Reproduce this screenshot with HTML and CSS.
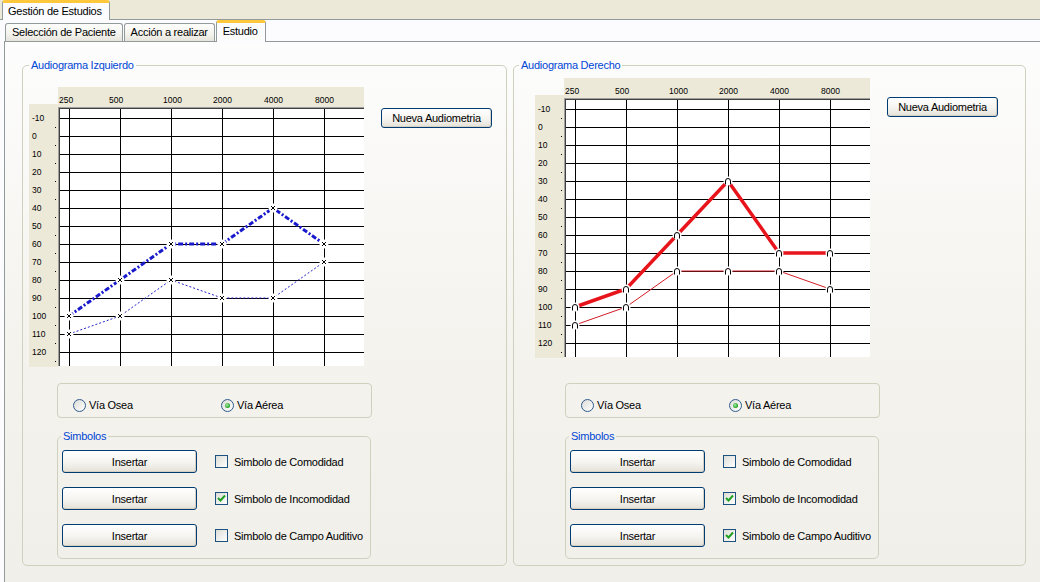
FILE: index.html
```html
<!DOCTYPE html>
<html lang="es">
<head>
<meta charset="utf-8">
<title>Gestión de Estudios</title>
<link rel="stylesheet" href="styles.css">
</head>
<body>
<div class="tabrow top">
  <div class="tab selected first">Gestión de Estudios</div>
</div>
<div class="page outer">
  <div class="tabrow inner">
    <div class="tab">Selección de Paciente</div>
    <div class="tab">Acción a realizar</div>
    <div class="tab selected">Estudio</div>
  </div>
  <div class="page innerpage">

    <fieldset class="group audio left">
      <legend>Audiograma Izquierdo</legend>
      <div class="audio-top">
        <svg class="chart" width="335" height="280" viewBox="0 0 335 280">
          <defs>
            <g id="mx"><circle r="4.5" fill="#fff"/><path d="M-2 -2L2 2M2 -2L-2 2" stroke="#000" stroke-width="1" fill="none"/></g>
          </defs>
          <rect x="29" y="0" width="306" height="20" fill="#ece9d8"/>
          <rect x="0" y="17" width="29" height="263" fill="#ece9d8"/>
          <rect x="29" y="20" width="306" height="259" fill="#fff"/>
          <path d="M29 31.5H335M29 49.5H335M29 67.5H335M29 85.5H335M29 103.5H335M29 121.5H335M29 139.5H335M29 157.5H335M29 175.5H335M29 193.5H335M29 211.5H335M29 229.5H335M29 247.5H335M29 265.5H335M40.5 20V279M91.5 20V279M142.5 20V279M193.5 20V279M244.5 20V279M295.5 20V279" stroke="#000" stroke-width="1" fill="none"/>
          <path d="M29 20.5H335M29.5 20V279" stroke="#a0a0a0" fill="none"/>
          <path d="M30 21.5H335M30.5 21V279" stroke="#404040" fill="none"/>
          <path d="M26 40h1v1h-1zM26 58h1v1h-1zM26 76h1v1h-1zM26 94h1v1h-1zM26 112h1v1h-1zM26 130h1v1h-1zM26 148h1v1h-1zM26 166h1v1h-1zM26 184h1v1h-1zM26 202h1v1h-1zM26 220h1v1h-1zM26 238h1v1h-1zM26 256h1v1h-1zM26 274h1v1h-1z" fill="#000"/>
          <g class="lbl">
            <text x="30" y="16">250</text><text x="80" y="16">500</text><text x="134" y="16">1000</text><text x="184" y="16">2000</text><text x="235" y="16">4000</text><text x="286" y="16">8000</text>
            <text x="3" y="34">-10</text><text x="3" y="52">0</text><text x="3" y="70">10</text><text x="3" y="88">20</text><text x="3" y="106">30</text><text x="3" y="124">40</text><text x="3" y="142">50</text><text x="3" y="160">60</text><text x="3" y="178">70</text><text x="3" y="196">80</text><text x="3" y="214">90</text><text x="3" y="232">100</text><text x="3" y="250">110</text><text x="3" y="268">120</text>
          </g>
          <polyline points="40,247 91,229 142,193 193,211 244,211 295,175" fill="none" stroke="#2323c8" stroke-width="1" stroke-dasharray="2 2"/>
          <polyline points="40,229 91,193 142,157 193,157 244,121 295,157" fill="none" stroke="#1a1acd" stroke-width="3" stroke-dasharray="5 2 2 2"/>
          <use href="#mx" x="40" y="229"/><use href="#mx" x="91" y="193"/><use href="#mx" x="142" y="157"/><use href="#mx" x="193" y="157"/><use href="#mx" x="244" y="121"/><use href="#mx" x="295" y="157"/>
          <use href="#mx" x="40" y="247"/><use href="#mx" x="91" y="229"/><use href="#mx" x="142" y="193"/><use href="#mx" x="193" y="211"/><use href="#mx" x="244" y="211"/><use href="#mx" x="295" y="175"/>
        </svg>
        <button class="btn nueva">Nueva Audiometria</button>
      </div>
      <div class="via">
        <label class="option"><span class="radio"></span>Vía Osea</label>
        <label class="option"><span class="radio checked"></span>Vía Aérea</label>
      </div>
      <fieldset class="group simbolos">
        <legend>Simbolos</legend>
        <div class="sym-grid">
          <button class="btn insert">Insertar</button>
          <label class="checkopt"><span class="check"></span>Simbolo de Comodidad</label>
          <button class="btn insert">Insertar</button>
          <label class="checkopt"><span class="check"><svg width="11" height="11" viewBox="0 0 11 11"><polyline points="2,5 4.5,7.5 9,2.5" fill="none" stroke="#21a121" stroke-width="2"/></svg></span>Simbolo de Incomodidad</label>
          <button class="btn insert">Insertar</button>
          <label class="checkopt"><span class="check"></span>Simbolo de Campo Auditivo</label>
        </div>
      </fieldset>
    </fieldset>

    <fieldset class="group audio right">
      <legend>Audiograma Derecho</legend>
      <div class="audio-top">
        <svg class="chart" width="335" height="280" viewBox="0 0 335 280">
          <defs>
            <g id="mo"><circle r="4.5" fill="#fff"/><path d="M-2.5 3.5V0A2.5 2.5 0 0 1 2.5 0V3.5" stroke="#000" stroke-width="1" fill="none"/></g>
          </defs>
          <rect x="29" y="0" width="306" height="20" fill="#ece9d8"/>
          <rect x="0" y="17" width="29" height="263" fill="#ece9d8"/>
          <rect x="29" y="20" width="306" height="259" fill="#fff"/>
          <path d="M29 31.5H335M29 49.5H335M29 67.5H335M29 85.5H335M29 103.5H335M29 121.5H335M29 139.5H335M29 157.5H335M29 175.5H335M29 193.5H335M29 211.5H335M29 229.5H335M29 247.5H335M29 265.5H335M40.5 20V279M91.5 20V279M142.5 20V279M193.5 20V279M244.5 20V279M295.5 20V279" stroke="#000" stroke-width="1" fill="none"/>
          <path d="M29 20.5H335M29.5 20V279" stroke="#a0a0a0" fill="none"/>
          <path d="M30 21.5H335M30.5 21V279" stroke="#404040" fill="none"/>
          <path d="M26 40h1v1h-1zM26 58h1v1h-1zM26 76h1v1h-1zM26 94h1v1h-1zM26 112h1v1h-1zM26 130h1v1h-1zM26 148h1v1h-1zM26 166h1v1h-1zM26 184h1v1h-1zM26 202h1v1h-1zM26 220h1v1h-1zM26 238h1v1h-1zM26 256h1v1h-1zM26 274h1v1h-1z" fill="#000"/>
          <g class="lbl">
            <text x="30" y="16">250</text><text x="80" y="16">500</text><text x="134" y="16">1000</text><text x="184" y="16">2000</text><text x="235" y="16">4000</text><text x="286" y="16">8000</text>
            <text x="3" y="34">-10</text><text x="3" y="52">0</text><text x="3" y="70">10</text><text x="3" y="88">20</text><text x="3" y="106">30</text><text x="3" y="124">40</text><text x="3" y="142">50</text><text x="3" y="160">60</text><text x="3" y="178">70</text><text x="3" y="196">80</text><text x="3" y="214">90</text><text x="3" y="232">100</text><text x="3" y="250">110</text><text x="3" y="268">120</text>
          </g>
          <polyline points="40,247 91,229 142,193 193,193 244,193 295,211" fill="none" stroke="#d21c24" stroke-width="1"/>
          <polyline points="40,229 91,211 142,157 193,103 244,175 295,175" fill="none" stroke="#e8141c" stroke-width="3.5"/>
          <use href="#mo" x="40" y="229"/><use href="#mo" x="91" y="211"/><use href="#mo" x="142" y="157"/><use href="#mo" x="193" y="103"/><use href="#mo" x="244" y="175"/><use href="#mo" x="295" y="175"/>
          <use href="#mo" x="40" y="247"/><use href="#mo" x="91" y="229"/><use href="#mo" x="142" y="193"/><use href="#mo" x="193" y="193"/><use href="#mo" x="244" y="193"/><use href="#mo" x="295" y="211"/>
        </svg>
        <button class="btn nueva">Nueva Audiometria</button>
      </div>
      <div class="via">
        <label class="option"><span class="radio"></span>Vía Osea</label>
        <label class="option"><span class="radio checked"></span>Vía Aérea</label>
      </div>
      <fieldset class="group simbolos">
        <legend>Simbolos</legend>
        <div class="sym-grid">
          <button class="btn insert">Insertar</button>
          <label class="checkopt"><span class="check"></span>Simbolo de Comodidad</label>
          <button class="btn insert">Insertar</button>
          <label class="checkopt"><span class="check"><svg width="11" height="11" viewBox="0 0 11 11"><polyline points="2,5 4.5,7.5 9,2.5" fill="none" stroke="#21a121" stroke-width="2"/></svg></span>Simbolo de Incomodidad</label>
          <button class="btn insert">Insertar</button>
          <label class="checkopt"><span class="check"><svg width="11" height="11" viewBox="0 0 11 11"><polyline points="2,5 4.5,7.5 9,2.5" fill="none" stroke="#21a121" stroke-width="2"/></svg></span>Simbolo de Campo Auditivo</label>
        </div>
      </fieldset>
    </fieldset>

  </div>
</div>
</body>
</html>
```

FILE: styles.css
```css
* { box-sizing: border-box; }
html, body { margin: 0; padding: 0; }
body {
  width: 1040px;
  height: 582px;
  overflow: hidden;
  background: #ece9d8;
  font-family: "Liberation Sans", Arial, sans-serif;
  font-size: 11px;
  letter-spacing: -0.25px;
  color: #000;
}

/* tabs */
.tabrow { display: flex; align-items: flex-end; }
.tabrow.top { height: 19px; padding-left: 2px; background: #ece9d8; }
.tabrow.inner { height: 21px; padding-left: 5px; }

.tab {
  height: 18px;
  line-height: 17px;
  padding: 0 6px;
  margin-right: 1px;
  border: 1px solid #919b9c;
  border-bottom: none;
  border-radius: 3px 3px 0 0;
  background: linear-gradient(#ffffff, #f3f2ec 60%, #e6e4db);
  white-space: nowrap;
}
.tab.selected {
  position: relative;
  z-index: 1;
  height: 22px;
  margin-bottom: -1px;
  line-height: 16px;
  padding: 0 7px 0 6px;
  background: #fcfcfe;
  border-top: 3px solid #ffc83c;
}
.tab.first { height: 20px; padding: 0 7px 0 5px; }

.page.outer {
  height: 563px;
  border-top: 1px solid #919b9c;
  background: #fcfcfe;
}
.page.innerpage {
  display: flex;
  gap: 6px;
  height: 541px;
  margin-left: 4px;
  padding: 17px 0 0 17px;
  border-top: 1px solid #919b9c;
  border-left: 1px solid #919b9c;
  background: linear-gradient(#fdfdfd, #f4f3ee 55%, #f0efe9);
}

/* group boxes */
.group {
  margin: 0;
  padding: 0;
  min-width: 0;
  border: 1px solid #d0d0bf;
  border-radius: 5px;
}
.group > legend {
  margin-left: 6px;
  padding: 0 2px;
  line-height: 13px;
  color: #0046d5;
}
.audio { height: 507px; }
.audio.left { width: 485px; }
.audio.right { width: 513px; }
.audio.right > legend { margin-left: 5px; }

.audio-top { display: flex; align-items: flex-start; }
.chart { display: block; flex: none; }
.chart .lbl text { font-family: "Liberation Sans", Arial, sans-serif; font-size: 8.5px; letter-spacing: 0; fill: #000; }
.left .chart { margin: 15px 0 0 6px; }
.right .chart { margin: 6px 0 0 21px; }

/* buttons */
.btn {
  font: inherit;
  letter-spacing: inherit;
  color: #000;
  padding: 0;
  border: 1px solid #003c74;
  border-radius: 3px;
  background: linear-gradient(#ffffff, #f5f4f0 55%, #e4e1d7);
  box-shadow: inset -1px -1px 0 #d6d0c4;
}
.btn.nueva { width: 111px; height: 20px; margin-left: 17px; }
.left .btn.nueva { margin-top: 36px; }
.right .btn.nueva { margin-top: 25px; }
.btn.insert { width: 135px; height: 23px; }

/* radio group */
.via {
  display: grid;
  grid-template-columns: 148px auto;
  align-items: center;
  width: 315px;
  height: 35px;
  padding: 9px 0 0 15px;
  border: 1px solid #d0d0bf;
  border-radius: 4px;
}
.left .via { margin: 16px 0 0 34px; }
.right .via { margin: 25px 0 0 51px; }

.option { display: flex; align-items: center; gap: 3px; }
.radio {
  position: relative;
  width: 13px;
  height: 13px;
  border-radius: 50%;
  border: 1px solid #2f5b8c;
  background: linear-gradient(135deg, #dcdcd7, #ffffff);
}
.radio.checked::after {
  content: "";
  position: absolute;
  left: 3px;
  top: 3px;
  width: 5px;
  height: 5px;
  border-radius: 50%;
  background: radial-gradient(circle at 40% 40%, #a6eaa6, #21a121 70%);
}

/* simbolos */
.simbolos { width: 314px; height: 129px; margin-top: 12px; }
.left .simbolos { margin-left: 34px; }
.right .simbolos { margin-left: 51px; }
.simbolos > legend { margin-left: 3px; }
.sym-grid {
  display: grid;
  grid-template-columns: 135px auto;
  column-gap: 18px;
  row-gap: 14px;
  align-items: center;
  padding: 7px 0 0 4px;
}
.checkopt { display: flex; align-items: center; gap: 6px; white-space: nowrap; }
.check {
  display: flex;
  align-items: center;
  justify-content: center;
  width: 13px;
  height: 13px;
  border: 1px solid #1c5180;
  background: linear-gradient(135deg, #dcdcd7, #ffffff);
}
.check svg { display: block; }
```
